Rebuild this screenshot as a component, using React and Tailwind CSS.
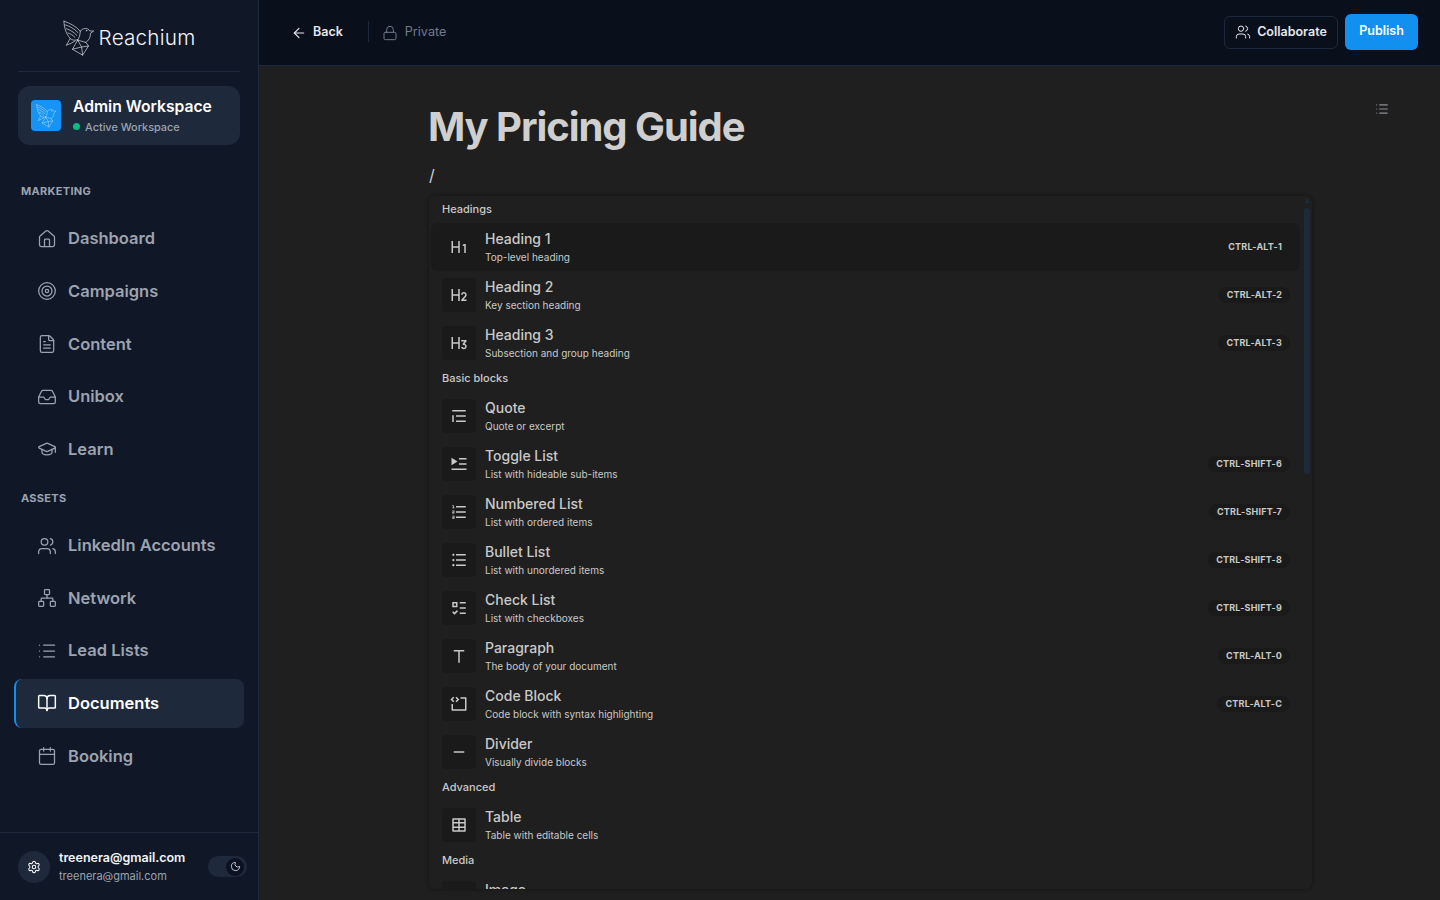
import {
  ArrowLeft, BookOpen, Calendar, FileText, GraduationCap, House, Inbox, List, Lock, Moon, Network, Settings, Target, Users,
} from 'lucide-react';
import {
  RiH1, RiH2, RiH3, RiQuoteText, RiPlayList2Fill, RiListOrdered, RiListUnordered, RiListCheck3, RiText, RiCodeBlock, RiSubtractFill, RiTable2, RiImage2Fill,
} from 'react-icons/ri';

const marketing = [
  { label: 'Dashboard', icon: House },
  { label: 'Campaigns', icon: Target },
  { label: 'Content', icon: FileText },
  { label: 'Unibox', icon: Inbox },
  { label: 'Learn', icon: GraduationCap },
];

const assets = [
  { label: 'LinkedIn Accounts', icon: Users },
  { label: 'Network', icon: Network },
  { label: 'Lead Lists', icon: List },
  { label: 'Documents', icon: BookOpen, active: true },
  { label: 'Booking', icon: Calendar },
];

const blocks = [
  {
    title: 'Headings',
    items: [
      { name: 'Heading 1', hint: 'Top-level heading', icon: RiH1, keys: 'CTRL-ALT-1', active: true },
      { name: 'Heading 2', hint: 'Key section heading', icon: RiH2, keys: 'CTRL-ALT-2' },
      { name: 'Heading 3', hint: 'Subsection and group heading', icon: RiH3, keys: 'CTRL-ALT-3' },
    ],
  },
  {
    title: 'Basic blocks',
    items: [
      { name: 'Quote', hint: 'Quote or excerpt', icon: RiQuoteText },
      { name: 'Toggle List', hint: 'List with hideable sub-items', icon: RiPlayList2Fill, keys: 'CTRL-SHIFT-6' },
      { name: 'Numbered List', hint: 'List with ordered items', icon: RiListOrdered, keys: 'CTRL-SHIFT-7' },
      { name: 'Bullet List', hint: 'List with unordered items', icon: RiListUnordered, keys: 'CTRL-SHIFT-8' },
      { name: 'Check List', hint: 'List with checkboxes', icon: RiListCheck3, keys: 'CTRL-SHIFT-9' },
      { name: 'Paragraph', hint: 'The body of your document', icon: RiText, keys: 'CTRL-ALT-0' },
      { name: 'Code Block', hint: 'Code block with syntax highlighting', icon: RiCodeBlock, keys: 'CTRL-ALT-C' },
      { name: 'Divider', hint: 'Visually divide blocks', icon: RiSubtractFill },
    ],
  },
  {
    title: 'Advanced',
    items: [{ name: 'Table', hint: 'Table with editable cells', icon: RiTable2 }],
  },
  {
    title: 'Media',
    items: [{ name: 'Image', hint: 'Resizable image with caption', icon: RiImage2Fill }],
  },
];

function BirdLogo({ className, stroke }) {
  return (
    <svg viewBox="40 24 98 112" className={className} fill="none" stroke={stroke} strokeWidth="2" strokeLinejoin="round" strokeLinecap="round">
      <path d="M43 27C62 33 82 44 93 58C99 47 117 46 122 57L134 57L124 64C125 76 119 86 110 92" />
      <path d="M43 27C43 47 50 66 62 80C68 86 76 86 84 84" />
      <path d="M46 38C60 42 75 50 86 62M50 50C62 54 73 60 82 70M55 63C63 65 70 70 76 76" />
      <path d="M93 58C92 70 90 78 85 85M62 80L50 101C60 97 69 93 77 88" />
      <path d="M85 85L69 113L100 131L118 103L110 92L85 85ZM69 113L97 106L118 103M85 85L97 106L100 131" />
      <circle cx="112" cy="56" r="1" />
    </svg>
  );
}

function NavRow({ item }) {
  const Icon = item.icon;
  if (item.active) {
    return (
      <div className="flex h-[49px] items-center gap-[11px] rounded-lg border-l-2 border-[#1190f0] bg-[#1e293b] pl-[21px] text-white">
        <Icon size={20} strokeWidth={1.75} />
        <span className="text-[16.5px] font-semibold">{item.label}</span>
      </div>
    );
  }
  return (
    <div className="flex h-[49px] items-center gap-[11px] pl-[23px] text-[#9ca3af]">
      <Icon size={20} strokeWidth={1.5} />
      <span className="text-[16.5px] font-semibold">{item.label}</span>
    </div>
  );
}

function Sidebar() {
  return (
    <aside className="flex h-full w-[259px] shrink-0 flex-col border-r border-[#1e293b] bg-[#101828]">
      <div className="mx-[18px] flex h-[72px] items-center justify-center gap-1 border-b border-[#1e293b] pt-[5px]">
        <BirdLogo className="h-[37px] w-[32px]" stroke="#e5e7eb" />
        <span className="text-[20.7px] font-light tracking-[0.2px] text-[#f3f4f6]">Reachium</span>
      </div>
      <div className="mx-[18px] mt-[14px] flex h-[59px] items-center gap-3 rounded-xl bg-[#1e293b] pl-[13px]">
        <div className="flex h-[31px] w-[30px] items-center justify-center rounded bg-[#1694f5]">
          <BirdLogo className="h-[24px] w-[21px]" stroke="#cfe8fc" />
        </div>
        <div>
          <div className="text-[15.7px] leading-5 font-semibold text-white">Admin Workspace</div>
          <div className="mt-[2px] flex items-center gap-[5px] text-[10.9px] leading-4 font-medium text-[#9ca3af]">
            <span className="h-[7px] w-[7px] rounded-full bg-[#10b981]" />
            Active Workspace
          </div>
        </div>
      </div>
      <div className="mt-[38px] ml-[21px] text-[11px] leading-[16px] font-bold tracking-[0.3px] text-[#9ca3af]">MARKETING</div>
      <nav className="mx-[14px] mt-[15.3px] flex flex-col gap-[3.6px]">
        {marketing.map((item) => <NavRow key={item.label} item={item} />)}
      </nav>
      <div className="mt-[16.1px] ml-[21px] text-[11px] leading-[16px] font-bold tracking-[0.3px] text-[#9ca3af]">ASSETS</div>
      <nav className="mx-[14px] mt-[15.3px] flex flex-col gap-[3.6px]">
        {assets.map((item) => <NavRow key={item.label} item={item} />)}
      </nav>
      <div className="mt-auto flex h-[68px] items-center border-t border-[#1e293b] pl-[18px]">
        <div className="flex h-8 w-8 items-center justify-center rounded-full bg-[#1e293b] text-white">
          <Settings size={14} strokeWidth={1.75} />
        </div>
        <div className="ml-[9px]">
          <div className="text-[12.5px] leading-[18px] font-semibold text-[#f3f4f6]">treenera@gmail.com</div>
          <div className="text-[11px] leading-[18px] text-[#9ca3af]">treenera@gmail.com</div>
        </div>
        <div className="mr-[11px] ml-auto flex h-[21px] w-[39px] items-center justify-end rounded-full bg-[#1e293b] pr-[3px]">
          <div className="flex h-[18px] w-[18px] items-center justify-center rounded-full bg-[#0b1120] text-[#e5e7eb]">
            <Moon size={11} strokeWidth={1.75} />
          </div>
        </div>
      </div>
    </aside>
  );
}

function TopBar() {
  return (
    <header className="flex h-[66px] shrink-0 items-center border-b border-[#1e293b] bg-[#0a0f1c] pr-[22px] pb-[2px] pl-[32px]">
      <ArrowLeft size={16} strokeWidth={1.75} className="mt-[2px] text-[#e5e7eb]" />
      <span className="mt-[2px] ml-[6px] text-[12.5px] font-semibold text-[#e5e7eb]">Back</span>
      <div className="mr-[13px] ml-[25px] h-[21px] w-px bg-[#1e293b]" />
      <Lock size={16} strokeWidth={1.5} className="mt-[2px] text-[#707a8c]" />
      <span className="mt-[2px] ml-[7px] text-[12.6px] text-[#707a8c]">Private</span>
      <div className="mt-[1px] ml-auto flex h-[33px] w-[114px] items-center justify-center gap-[6px] rounded-md border border-[#1e293b] text-[12.5px] font-semibold text-[#e5e7eb]">
        <Users size={16} strokeWidth={1.5} />
        Collaborate
      </div>
      <div className="ml-[7px] flex h-9 w-[73px] items-center justify-center rounded-md bg-[#1190f0] text-[12.5px] font-semibold text-white">
        Publish
      </div>
    </header>
  );
}

function BlockRow({ item }) {
  const Icon = item.icon;
  return (
    <div className={`flex h-12 items-center rounded-md pr-[10px] pl-[11px] ${item.active ? 'bg-[#1a1a1a]' : ''}`}>
      <div className="flex h-[34px] w-[34px] items-center justify-center rounded bg-[#1a1a1a] text-[#c9c9c9]">
        <Icon size={18} />
      </div>
      <div className="ml-[9px] min-w-0">
        <div className="text-[14px] leading-[20px] font-medium text-[#c9c9c9]">{item.name}</div>
        <div className="text-[10px] leading-[16px] text-[#c9c9c9]">{item.hint}</div>
      </div>
      {item.keys && (
        <div className="ml-auto flex h-4 items-center rounded-full bg-[#1a1a1a] px-2 text-[9px] font-bold tracking-[0.2px] text-[#c9c9c9]">
          {item.keys}
        </div>
      )}
    </div>
  );
}

function SlashMenu() {
  return (
    <div className="absolute top-[130px] left-[170px] h-[693px] w-[883px] overflow-hidden rounded-md bg-[#1f1f1f] shadow-[0_0_4px_rgba(0,0,0,0.4)]">
      <div className="w-[871px] pt-[2px] pl-[2px]">
        {blocks.map((group) => (
          <div key={group.title}>
            <div className="flex h-[25px] items-center pb-[2.5px] pl-[11px] text-[11px] font-medium text-[#c9c9c9]">{group.title}</div>
            {group.items.map((item) => <BlockRow key={item.name} item={item} />)}
          </div>
        ))}
      </div>
      <div className="absolute top-[2px] right-[2px] h-0 w-0 border-x-[3px] border-b-[5px] border-x-transparent border-b-[#1e293b]" />
      <div className="absolute top-[12px] right-[2px] h-[266px] w-[6px] rounded-full bg-[#1e293b]" />
    </div>
  );
}

export default function App() {
  return (
    <div className="flex h-screen w-full overflow-hidden bg-[#1f1f1f] font-['Inter',sans-serif]">
      <Sidebar />
      <div className="flex min-w-0 flex-1 flex-col">
        <TopBar />
        <main className="relative flex-1 overflow-hidden pt-[35px] pl-[170px]">
          <List size={14} className="absolute top-[36px] right-[51px] text-[#8b8f96]" />
          <h1 className="-ml-[1px] text-[40px] leading-[52px] font-bold tracking-[-1.06px] text-[#cfcfcf]">My Pricing Guide</h1>
          <div className="mt-[10px] text-[16px] leading-[24px] text-[#cfcfcf]">/</div>
          <SlashMenu />
        </main>
      </div>
    </div>
  );
}
